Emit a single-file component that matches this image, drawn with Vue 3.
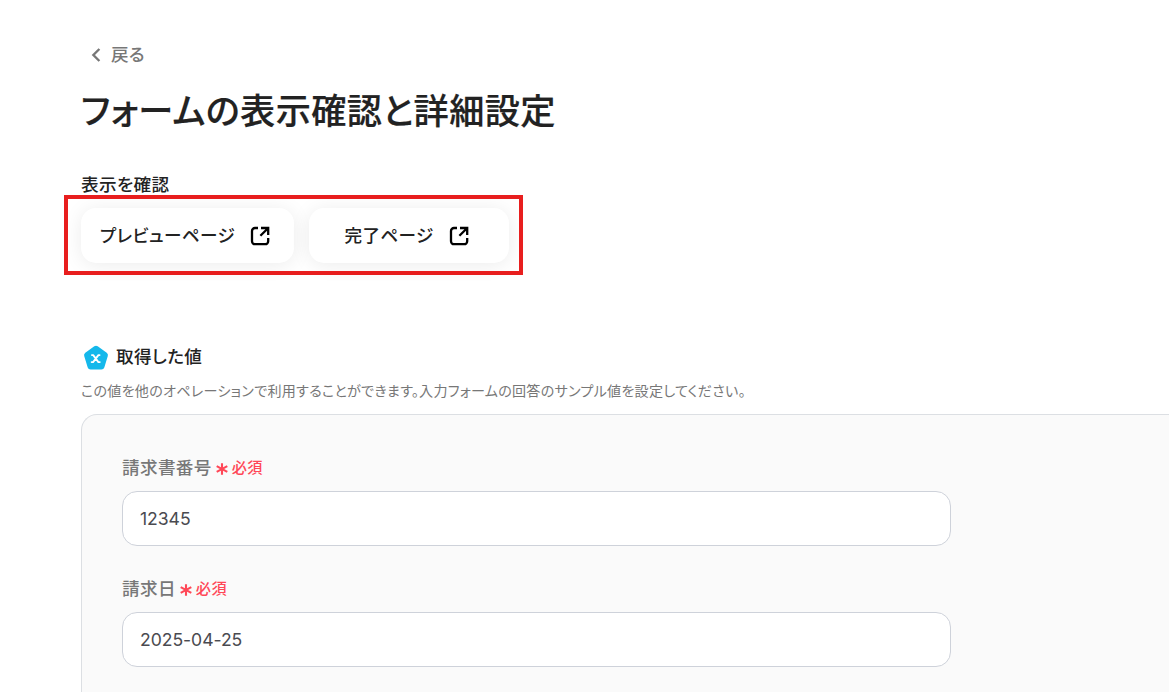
<template>
  <main class="page">
    <a class="back">
      <svg class="back-icon" viewBox="0 0 10 16">
        <path d="M8.4 2 2.4 8l6 6" />
      </svg>
      <span class="back-text">戻る</span>
    </a>
    <h1 class="title">フォームの表示確認と詳細設定</h1>

    <section class="preview">
      <h2 class="preview-title">表示を確認</h2>
      <div class="preview-buttons">
        <button
          v-for="link in links"
          :key="link.label"
          type="button"
          class="link-button"
          :class="link.size">
          <span class="link-text">{{ link.label }}</span>
          <svg class="link-icon" viewBox="0 0 20 20">
            <path d="M8 2H5a3 3 0 0 0-3 3v10.2a3 3 0 0 0 3 3h10.2a3 3 0 0 0 3-3V12" />
            <path d="M11 2h7.2v7M18 2.2 10.4 9.8" />
          </svg>
        </button>
        <div class="highlight"></div>
      </div>
    </section>

    <section class="values">
      <div class="values-head">
        <svg class="values-icon" viewBox="0 0 26 26">
          <path class="pentagon" d="M11.3 1.3a3 3 0 0 1 3.4 0l9 6.4a3 3 0 0 1 1.1 3.3l-3.5 11.4a3 3 0 0 1-2.9 2.1H7.6a3 3 0 0 1-2.9-2.1L1.2 11a3 3 0 0 1 1.1-3.3z" />
          <path class="cross" d="M8.9 10.1h1.3l5.2 7h1.4M16.6 10.1h-1.2l-5.3 7H8.6" />
        </svg>
        <h2 class="values-title">取得した値</h2>
      </div>
      <p class="description">この値を他のオペレーションで利用することができます。入力フォームの回答のサンプル値を設定してください。</p>

      <div class="panel">
        <div v-for="field in fields" :key="field.label" class="field">
          <label class="field-label">
            <span>{{ field.label }}</span>
            <svg class="asterisk" viewBox="0 0 12 12">
              <path d="M6 .3v11.4M.7 3.1l10.6 5.8M11.3 3.1.7 8.9" />
            </svg>
            <span class="required">必須</span>
          </label>
          <input v-model="field.value" class="field-input" type="text" />
        </div>
      </div>
    </section>
  </main>
</template>

<script setup>
import { ref } from 'vue'

const links = [
  { label: 'プレビューページ', size: 'wide' },
  { label: '完了ページ', size: 'narrow' }
]

const fields = ref([
  { label: '請求書番号', value: '12345' },
  { label: '請求日', value: '2025-04-25' }
])
</script>

<style>
body {
  background: #fff;
  overflow: hidden;
}
</style>

<style scoped>
.page {
  box-sizing: border-box;
  height: 692px;
  padding: 42px 0 0 81px;
  overflow: hidden;
  color: #222;
  font-family: Inter, "Noto Sans CJK JP", sans-serif;
  font-feature-settings: "palt";
  letter-spacing: 0.35px;
}

h1,
h2,
p {
  margin: 0;
}

svg {
  display: block;
  flex: none;
  fill: none;
}

.back {
  display: flex;
  align-items: center;
  gap: 10px;
  height: 26px;
  padding-left: 10px;
  color: #777;
  font-size: 17.6px;
  font-weight: 500;
}

.back-text {
  padding-bottom: 4px;
}

.back-icon {
  width: 10px;
  height: 16px;
  stroke: #777;
  stroke-width: 2.4;
}

.title {
  height: 52px;
  margin-top: 17px;
  font-size: 35.2px;
  font-weight: 500;
  line-height: 52px;
  white-space: nowrap;
  -webkit-text-stroke: 0.2px;
}

.preview {
  margin-top: 35px;
}

.preview-title {
  height: 26px;
  font-size: 17.6px;
  font-weight: 500;
  line-height: 26px;
}

.preview-buttons {
  position: relative;
  display: flex;
  gap: 15px;
  margin-top: 10px;
}

.link-button {
  display: flex;
  box-sizing: border-box;
  align-items: center;
  justify-content: center;
  gap: 15px;
  height: 55px;
  padding: 0 5px 0 0;
  border: 0;
  border-radius: 15px;
  background: #fff;
  box-shadow: 0 2px 20px rgba(0, 0, 0, 0.08);
  color: #222;
  font: inherit;
  font-size: 17.6px;
  font-weight: 500;
  letter-spacing: inherit;
  white-space: nowrap;
}

.link-text {
  padding-bottom: 2px;
}

.wide {
  width: 213px;
}

.narrow {
  width: 200px;
}

.link-icon {
  width: 20px;
  height: 20px;
  stroke: #000;
  stroke-width: 2.3;
}

/* red frame around both buttons */
.highlight {
  position: absolute;
  top: -13px;
  left: -17px;
  box-sizing: border-box;
  width: 459px;
  height: 80px;
  border: 4px solid #e81e1e;
  pointer-events: none;
}

.values {
  margin-top: 81px;
}

.values-head {
  display: flex;
  align-items: center;
  gap: 7px;
  height: 26px;
  padding-left: 2px;
}

.values-icon {
  width: 26px;
  height: 26px;
  margin-top: 1px;
}

.pentagon {
  fill: #14b8eb;
}

.cross {
  stroke: #fff;
  stroke-width: 1.8;
  stroke-linecap: round;
  stroke-linejoin: round;
}

.values-title {
  font-size: 17.6px;
  font-weight: 500;
  line-height: 26px;
}

.description {
  height: 20px;
  margin-top: 11px;
  color: #777;
  font-size: 14.08px;
  letter-spacing: 0.26px;
  line-height: 20px;
  white-space: nowrap;
}

.panel {
  display: flex;
  flex-direction: column;
  gap: 30px;
  height: 400px;
  margin-top: 13px;
  padding: 40px 0 0 40px;
  border: 1px solid #dcdfe3;
  border-right: 0;
  border-radius: 16px 0 0 0;
  background: #fafafa;
}

.field-label {
  display: flex;
  align-items: center;
  height: 22px;
  padding-bottom: 4px;
  color: #777;
  font-size: 17.6px;
  font-weight: 500;
}

.asterisk {
  width: 12px;
  height: 12px;
  margin: 5px 4px 0 4px;
  stroke: #ff4757;
  stroke-width: 2.1;
}

.required {
  color: #ff4757;
  font-size: 15.2px;
}

.field-input {
  display: block;
  box-sizing: border-box;
  width: 829px;
  height: 55px;
  margin-top: 10px;
  padding: 0 17px;
  border: 1px solid #ced2da;
  border-radius: 15px;
  outline: none;
  background: #fff;
  color: #4a4a50;
  font: inherit;
  font-size: 17.6px;
  letter-spacing: -0.05px;
}
</style>
